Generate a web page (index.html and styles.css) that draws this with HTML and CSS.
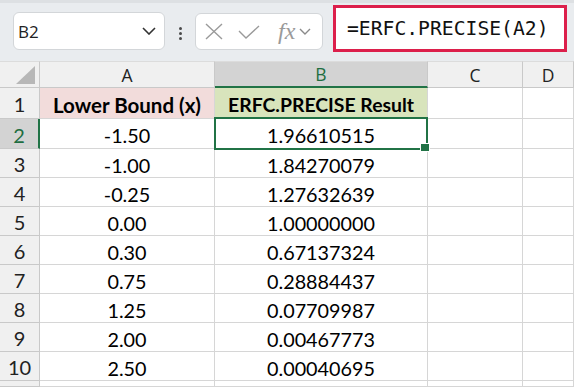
FILE: index.html
```html
<!DOCTYPE html>
<html lang="en">
<head>
<meta charset="utf-8">
<title>ERFC.PRECISE</title>
<link rel="stylesheet" href="styles.css">
</head>
<body>
<div class="app">
  <div class="toolbar">
    <div class="namebox">
      <span class="nb-text">B2</span>
      <svg class="chev" width="14" height="8" viewBox="0 0 14 8"><polyline points="1,1 7,7 13,1" fill="none" stroke="#333" stroke-width="1.6"/></svg>
    </div>
    <div class="dots"><span></span><span></span><span></span></div>
    <div class="fnbox">
      <svg class="ico-x" width="18" height="17" viewBox="0 0 18 17"><path d="M1 1 L17 16 M17 1 L1 16" stroke="#9a9a9a" stroke-width="1.4" fill="none"/></svg>
      <svg class="ico-check" width="22" height="14" viewBox="0 0 22 14"><polyline points="1,6 8,13 21,1" fill="none" stroke="#9a9a9a" stroke-width="1.4"/></svg>
      <span class="fx">fx</span>
      <svg class="chev-s" width="12" height="7" viewBox="0 0 12 7"><polyline points="1,1 6,6 11,1" fill="none" stroke="#8a8a8a" stroke-width="1.4"/></svg>
    </div>
    <div class="formula">=ERFC.PRECISE(A2)</div>
  </div>
  <div class="sheet">
    <div class="hd corner"><span class="tri"></span></div>
    <div class="hd col">A</div>
    <div class="hd col sel">B</div>
    <div class="hd col">C</div>
    <div class="hd col">D</div>

    <div class="hd row">1</div>
    <div class="c head-a">Lower Bound (x)</div>
    <div class="c head-b">ERFC.PRECISE Result</div>
    <div class="c"></div><div class="c"></div>

    <div class="hd row sel">2</div>
    <div class="c">-1.50</div>
    <div class="c active">1.96610515<span class="handle"></span></div>
    <div class="c"></div><div class="c"></div>

    <div class="hd row">3</div>
    <div class="c">-1.00</div>
    <div class="c">1.84270079</div>
    <div class="c"></div><div class="c"></div>

    <div class="hd row">4</div>
    <div class="c">-0.25</div>
    <div class="c">1.27632639</div>
    <div class="c"></div><div class="c"></div>

    <div class="hd row">5</div>
    <div class="c">0.00</div>
    <div class="c">1.00000000</div>
    <div class="c"></div><div class="c"></div>

    <div class="hd row">6</div>
    <div class="c">0.30</div>
    <div class="c">0.67137324</div>
    <div class="c"></div><div class="c"></div>

    <div class="hd row">7</div>
    <div class="c">0.75</div>
    <div class="c">0.28884437</div>
    <div class="c"></div><div class="c"></div>

    <div class="hd row">8</div>
    <div class="c">1.25</div>
    <div class="c">0.07709987</div>
    <div class="c"></div><div class="c"></div>

    <div class="hd row">9</div>
    <div class="c">2.00</div>
    <div class="c">0.00467773</div>
    <div class="c"></div><div class="c"></div>

    <div class="hd row">10</div>
    <div class="c">2.50</div>
    <div class="c">0.00040695</div>
    <div class="c"></div><div class="c"></div>

    <div class="hd row"></div>
    <div class="c"></div><div class="c"></div><div class="c"></div><div class="c"></div>
  </div>
</div>
</body>
</html>
```

FILE: styles.css
```css
html, body {
  margin: 0;
  padding: 0;
  background: #ffffff;
}
.app {
  width: 574px;
  height: 387px;
  overflow: hidden;
}
.toolbar {
  height: 61px;
  box-sizing: border-box;
  background: #e9ecef;
  border-top: 3px solid #dde0e3;
  display: flex;
  align-items: flex-start;
  position: relative;
}
.namebox {
  margin-left: 13px;
  margin-top: 9px;
  width: 152px;
  height: 38px;
  box-sizing: border-box;
  background: #fff;
  border: 1px solid #d3d6d9;
  border-radius: 6px;
  display: flex;
  align-items: center;
  justify-content: space-between;
  padding: 0 8px 0 4px;
}
.nb-text {
  font-family: "Open Sans", "Noto Sans", sans-serif;
  font-size: 17px;
  color: #222;
}
.dots {
  margin-left: 14px;
  margin-top: 24px;
  width: 3px;
  display: flex;
  flex-direction: column;
  gap: 2px;
}
.dots span {
  width: 3px;
  height: 3px;
  border-radius: 50%;
  background: #4a4a4a;
}
.fnbox {
  margin-left: 13px;
  margin-top: 10px;
  width: 128px;
  height: 37px;
  box-sizing: border-box;
  background: #fff;
  border: 1px solid #d3d6d9;
  border-radius: 6px;
  display: flex;
  align-items: center;
  padding-left: 9px;
}
.ico-check { margin-left: 15px; }
.fx {
  margin-left: 18px;
  font-family: "Liberation Serif", "DejaVu Serif", serif;
  font-style: italic;
  font-size: 24px;
  color: #9a9a9a;
  line-height: 1;
  margin-top: -2px;
}
.chev-s { margin-left: 4px; }
.formula {
  margin-left: 10px;
  margin-top: 2px;
  width: 234px;
  height: 47px;
  box-sizing: border-box;
  background: #fff;
  border: 3px solid #dc1f4b;
  font-family: "DejaVu Sans Mono", "Liberation Mono", monospace;
  font-size: 19.7px;
  color: #111;
  display: flex;
  align-items: center;
  padding-left: 11px;
  padding-bottom: 1px;
}
.sheet {
  display: grid;
  grid-template-columns: 40px 175px 213px 95px 51px;
  grid-template-rows: 27px 31px 30px repeat(8, 29px) 6px;
}
.hd {
  background: #f0f0f0;
  border-right: 1px solid #c9c9c9;
  border-bottom: 1px solid #c9c9c9;
  box-sizing: border-box;
  font-family: "Open Sans", "Noto Sans", sans-serif;
  font-size: 17.5px;
  color: #222;
  display: flex;
  align-items: center;
  justify-content: center;
}
.hd.col {
  border-top: 1px solid #dcdcdc;
}
.corner {
  border-top: 1px solid #dcdcdc;
  position: relative;
}
.tri {
  position: absolute;
  right: 4px;
  bottom: 3px;
  width: 0;
  height: 0;
  border-left: 19px solid transparent;
  border-bottom: 18px solid #b7b7b7;
}
.hd.col.sel {
  background: #d3d3d3;
  color: #1e6e41;
  border-bottom: 2px solid #217346;
}
.hd.row {
  font-family: "Lato", "Open Sans", sans-serif;
  font-size: 20px;
  padding-top: 2px;
}
.hd.row.sel {
  background: #d3d3d3;
  color: #1e6e41;
  border-right: 2px solid #217346;
}
.c {
  border-right: 1px solid #d6d6d6;
  border-bottom: 1px solid #d6d6d6;
  box-sizing: border-box;
  font-family: "Lato", "Open Sans", sans-serif;
  font-size: 19.8px;
  color: #000;
  display: flex;
  align-items: center;
  justify-content: center;
  padding-top: 3px;
}
.head-a {
  background: #f2dcdb;
  font-weight: 700;
  font-size: 20.5px;
}
.head-b {
  background: #d8e4bc;
  font-weight: 700;
  font-size: 19.4px;
}
.active {
  position: relative;
}
.active::before {
  content: "";
  position: absolute;
  left: -1px;
  top: -2px;
  right: -1px;
  bottom: -2px;
  border: 2px solid #217346;
  pointer-events: none;
}
.handle {
  position: absolute;
  right: -3px;
  bottom: -4px;
  width: 8px;
  height: 7px;
  background: #217346;
  border: 1px solid #fff;
  z-index: 2;
}
```
